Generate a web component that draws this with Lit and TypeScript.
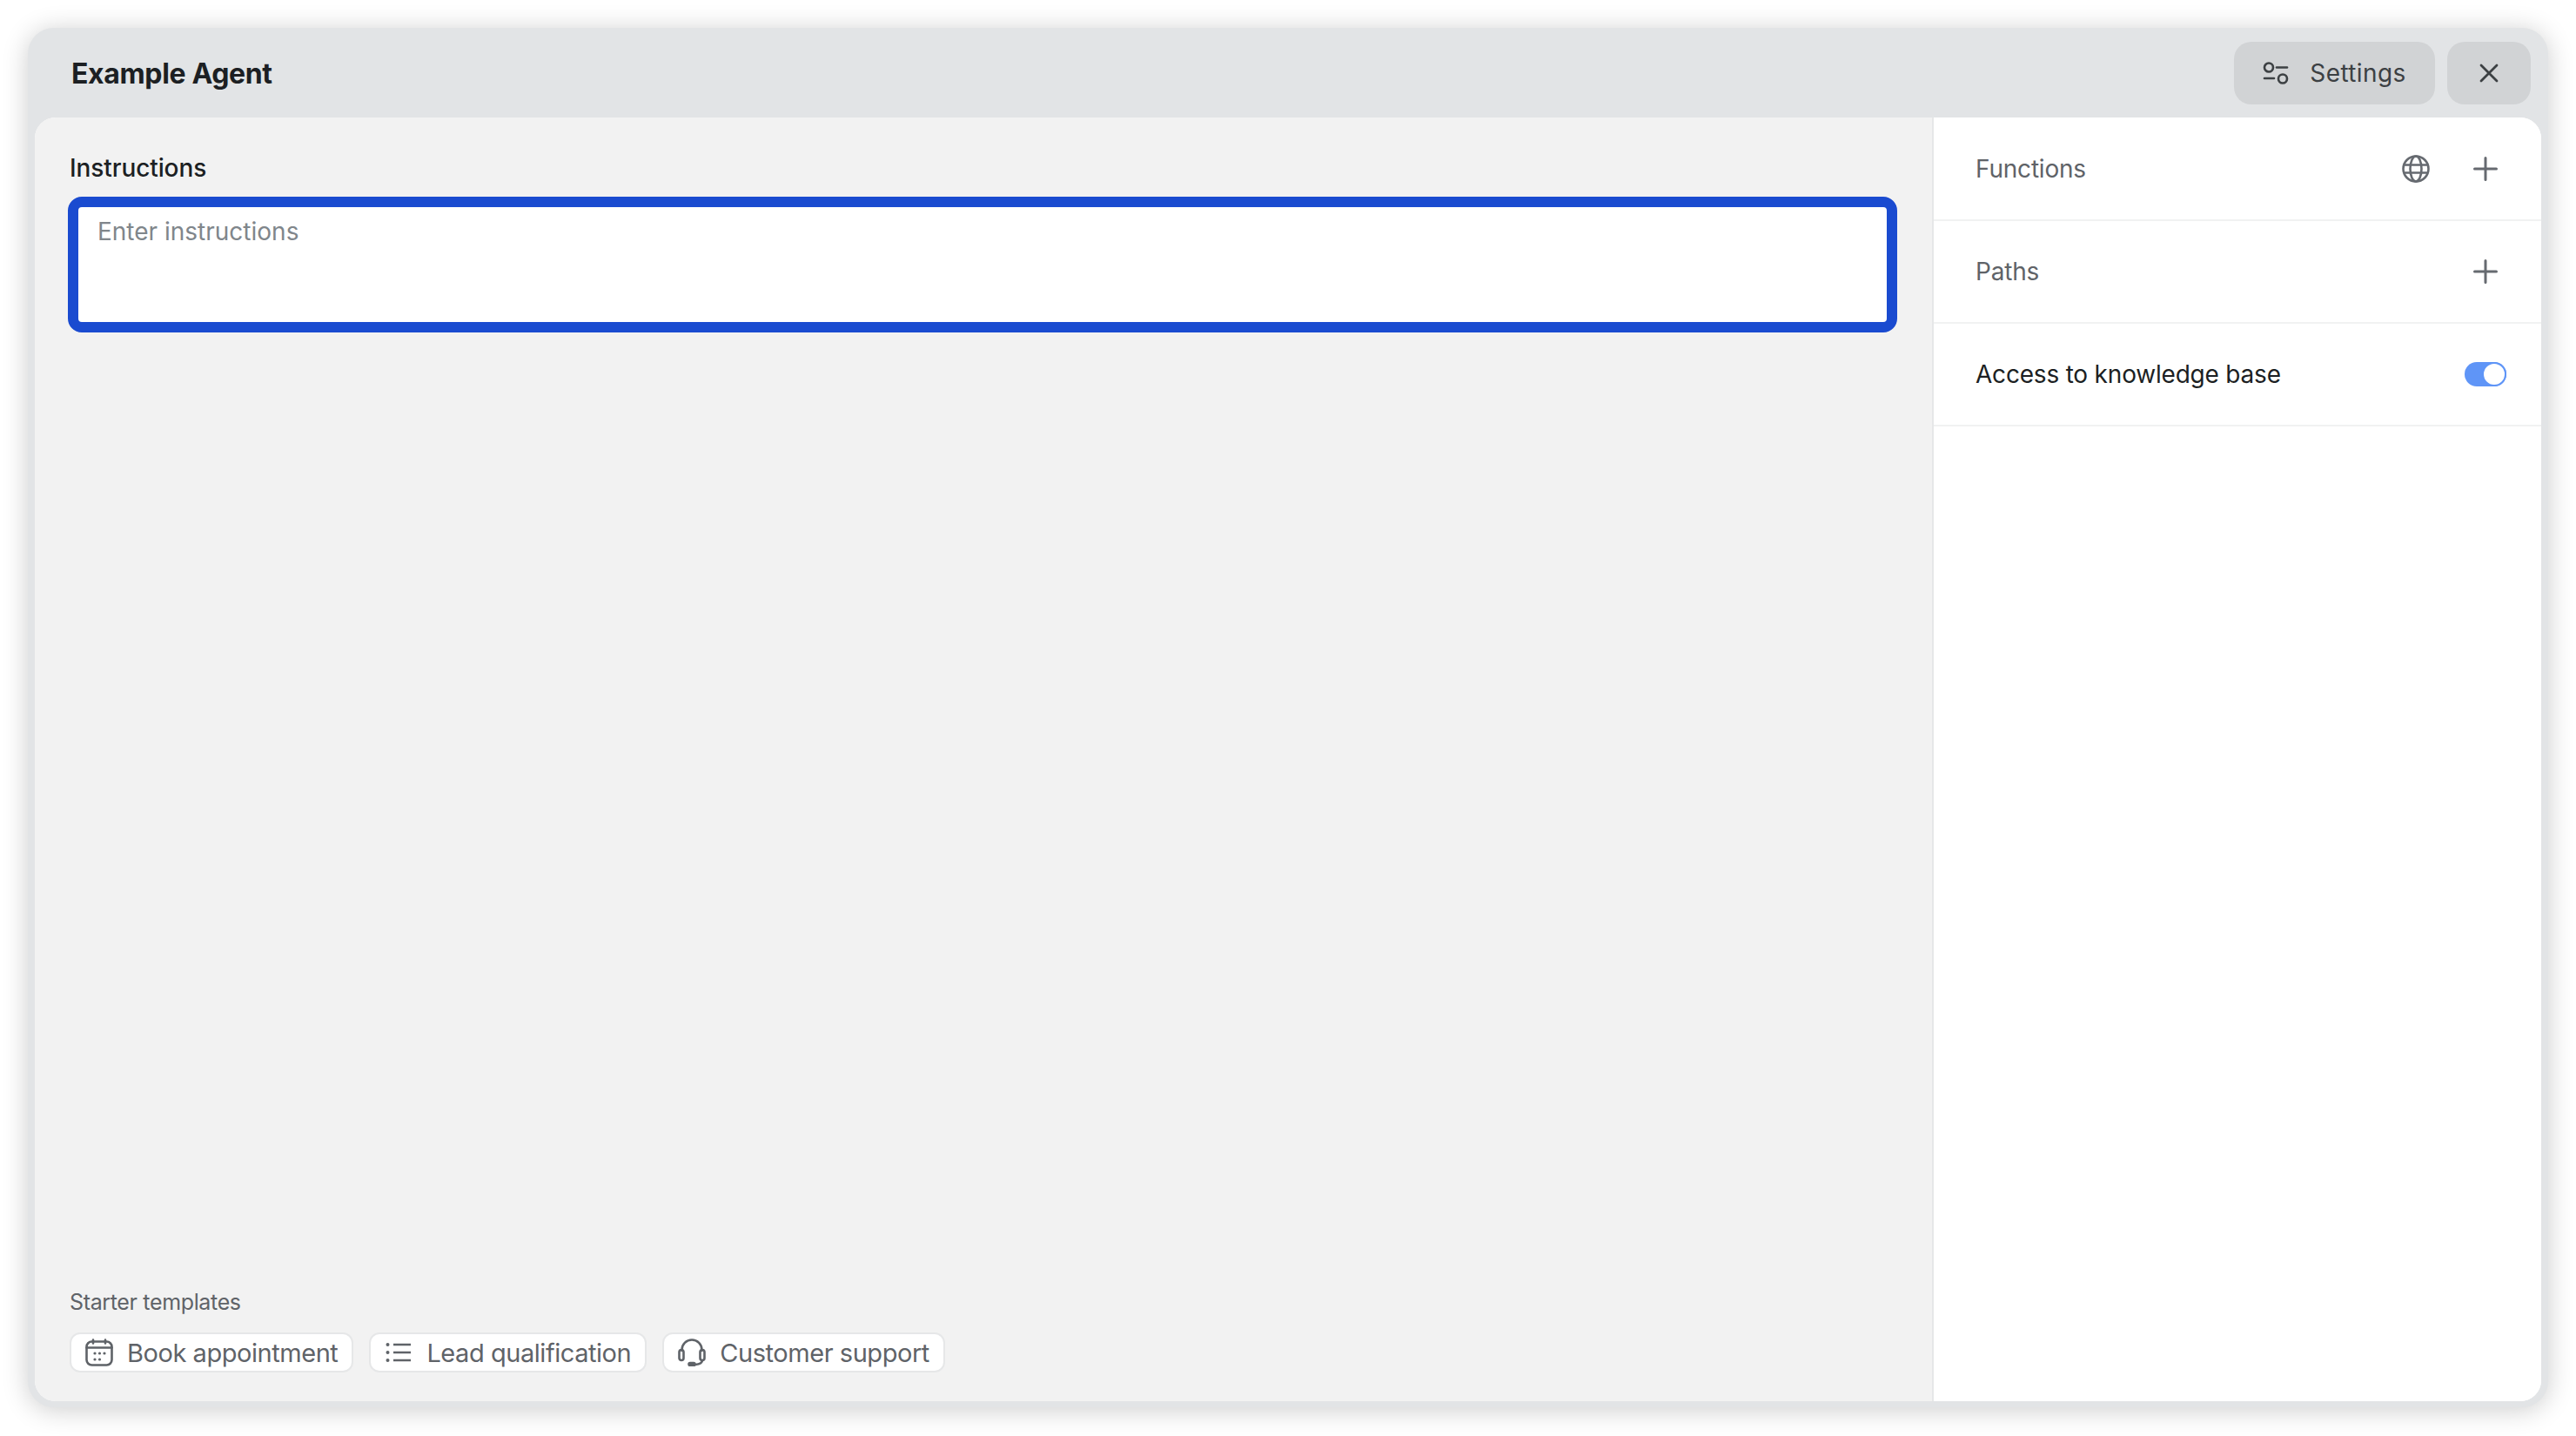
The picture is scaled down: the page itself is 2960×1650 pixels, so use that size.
import { LitElement, html, css, svg } from "lit";
import { customElement } from "lit/decorators.js";

const slidersIcon = svg`<svg class="ic-settings" viewBox="0 0 30 26" fill="none" stroke="currentColor" stroke-width="2.6" stroke-linecap="round"><circle cx="7" cy="6.5" r="5"/><path d="M16 6.5h12"/><path d="M2 19h11"/><circle cx="23" cy="19.5" r="5"/></svg>`;
const closeIcon = svg`<svg class="ic-close" viewBox="0 0 22 22" fill="none" stroke="currentColor" stroke-width="2.8" stroke-linecap="round"><path d="M2 2l18 18M20 2L2 20"/></svg>`;
const plusIcon = svg`<svg class="ic-plus" viewBox="0 0 28 28" fill="none" stroke="currentColor" stroke-width="3" stroke-linecap="round"><path d="M14 1.5v25M1.5 14h25"/></svg>`;
const globeIcon = svg`<svg class="ic-globe" viewBox="0 0 32 32" fill="none" stroke="currentColor" stroke-width="2.6"><circle cx="16" cy="16" r="14.5"/><ellipse cx="16" cy="16" rx="6.5" ry="14.5"/><path d="M2.5 11.5h27M2.5 20.5h27"/></svg>`;
const calendarIcon = svg`<svg class="ic-tpl" viewBox="0 0 32 32" fill="none" stroke="currentColor" stroke-width="2.6" stroke-linecap="round"><rect x="1.5" y="3.500" width="29" height="27" rx="6"/><path d="M1.5 10.500h29M9 1.5v4M23 1.5v4"/><g fill="currentColor" stroke="none"><circle cx="11" cy="17" r="1.6"/><circle cx="16.500" cy="17" r="1.6"/><circle cx="22" cy="17" r="1.6"/><circle cx="11" cy="24" r="1.6"/><circle cx="16.500" cy="24" r="1.6"/></g></svg>`;
const listIcon = svg`<svg class="ic-tpl" viewBox="-2 0 32 32" fill="none" stroke="currentColor" stroke-width="2.6" stroke-linecap="butt"><path d="M8 7h20M8 16h20M8 25h20"/><g fill="currentColor" stroke="none"><circle cx="1.500" cy="7" r="2"/><circle cx="1.500" cy="16" r="2"/><circle cx="1.500" cy="25" r="2"/></g></svg>`;
const headsetIcon = svg`<svg class="ic-tpl" viewBox="0 0 32 32" fill="none" stroke="currentColor" stroke-width="2.6" stroke-linecap="round"><path d="M4.500 14v-1a11.500 11.500 0 0 1 23 0v1"/><rect x="1.500" y="13" width="5" height="12" rx="2.500"/><rect x="25.500" y="13" width="5" height="12" rx="2.500"/><path d="M28 25c0 3-3 4.500-8 5"/><rect x="12.500" y="28" width="7" height="3" rx="1.500" fill="currentColor"/></svg>`;

@customElement("app-root")
export class AppRoot extends LitElement {
  static styles = css`
    :host {
      display: block;
      box-sizing: border-box;
      width: 2960px;
      height: 1650px;
      padding: 32px;
      background: #fff;
      font-family: "Inter", "Liberation Sans", sans-serif;
    }
    * { box-sizing: border-box; }
    .window {
      height: 1585px;
      display: flex;
      flex-direction: column;
      padding: 0 8px 7px 8px;
      background: #e2e4e6;
      border-radius: 30px;
      box-shadow: 0 3px 30px rgba(0, 0, 0, 0.2);
    }
    .header {
      flex: none;
      height: 103px;
      padding: 16px 12px 15px 42px;
      display: flex;
      align-items: center;
      gap: 14px;
    }
    .title {
      margin: 0 auto 0 0;
      font-size: 32px;
      font-weight: 700;
      letter-spacing: -0.35px;
      color: #1c1f23;
    }
    .btn {
      height: 72px;
      border: 0;
      border-radius: 20px;
      background: #d1d3d5;
      color: #3c4043;
      display: flex;
      align-items: center;
      justify-content: center;
      font: inherit;
      padding: 0;
    }
    .btn.settings {
      width: 231px;
      gap: 24px;
      font-size: 28px;
      font-weight: 400;
      letter-spacing: 0.4px;
    }
    .btn.close { width: 96px; }
    .ic-settings { width: 30px; height: 26px; }
    .ic-close { width: 22px; height: 22px; }
    .ic-plus { width: 28px; height: 28px; }
    .ic-globe { width: 32px; height: 32px; }
    .ic-tpl { width: 32px; height: 32px; flex: none; }
    .body {
      flex: 1;
      min-height: 0;
      display: flex;
      border-radius: 24px;
      overflow: hidden;
      background: #fff;
    }
    .main {
      width: 2182px;
      flex: none;
      display: flex;
      flex-direction: column;
      padding: 41px 38px 33px 38px;
      background: #f2f2f2;
      border-right: 2px solid #e6e7e8;
    }
    .label {
      font-size: 28px;
      font-weight: 500;
      letter-spacing: -0.1px;
      line-height: 34px;
      color: #1c1f23;
      margin-bottom: 16px;
      margin-left: 2px;
    }
    textarea {
      display: block;
      width: 2102px;
      height: 156px;
      border: 12px solid #1a4bd0;
      border-radius: 16px;
      background: #fff;
      padding: 10px 22px;
      margin: 0;
      resize: none;
      outline: none;
      font: inherit;
      font-size: 28px;
      line-height: 36px;
      letter-spacing: 0;
      color: #1c1f23;
    }
    textarea::placeholder { color: #80868b; opacity: 1; }
    .starter {
      margin-top: auto;
      margin-left: 2px;
    }
    .starter-label {
      font-size: 25px;
      letter-spacing: -0.35px;
      line-height: 30px;
      color: #5f6368;
      margin-bottom: 20px;
    }
    .pills { display: flex; gap: 18px; }
    .pill {
      height: 46px;
      display: flex;
      align-items: center;
      gap: 16px;
      padding: 0 16px;
      background: #fff;
      border: 2px solid #e6e7e8;
      border-radius: 12px;
      font-size: 29px;
      letter-spacing: -0.45px;
      color: #5f6368;
      white-space: nowrap;
    }
    .side { flex: 1; min-width: 0; padding-top: 1px; background: #fff; }
    .row {
      height: 118px;
      display: flex;
      align-items: center;
      padding: 0 50px 0 48px;
      border-bottom: 2px solid #f1f2f2;
      font-size: 28px;
      letter-spacing: -0.2px;
      color: #5f6368;
    }
    .row .name { margin-right: auto; }
    .row svg { color: #666a70; }
    .row .ic-globe { margin-right: 50px; }
    .row.dark { color: #1c1f23; padding-right: 40px; }
    .toggle {
      width: 48px;
      height: 28px;
      border-radius: 14px;
      background: #5f95f7;
      display: flex;
      justify-content: flex-end;
    }
    .knob {
      width: 28px;
      height: 28px;
      border-radius: 50%;
      background: #fff;
      border: 2.500px solid #5f95f7;
    }
  `;

  render() {
    return html`
      <div class="window">
        <header class="header">
          <h1 class="title">Example Agent</h1>
          <button class="btn settings">${slidersIcon}<span>Settings</span></button>
          <button class="btn close" aria-label="Close">${closeIcon}</button>
        </header>
        <div class="body">
          <section class="main">
            <div class="label">Instructions</div>
            <textarea placeholder="Enter instructions"></textarea>
            <div class="starter">
              <div class="starter-label">Starter templates</div>
              <div class="pills">
                <div class="pill">${calendarIcon}<span>Book appointment</span></div>
                <div class="pill">${listIcon}<span>Lead qualification</span></div>
                <div class="pill">${headsetIcon}<span>Customer support</span></div>
              </div>
            </div>
          </section>
          <aside class="side">
            <div class="row"><span class="name">Functions</span>${globeIcon}${plusIcon}</div>
            <div class="row"><span class="name">Paths</span>${plusIcon}</div>
            <div class="row dark"><span class="name">Access to knowledge base</span><div class="toggle"><div class="knob"></div></div></div>
          </aside>
        </div>
      </div>
    `;
  }
}
